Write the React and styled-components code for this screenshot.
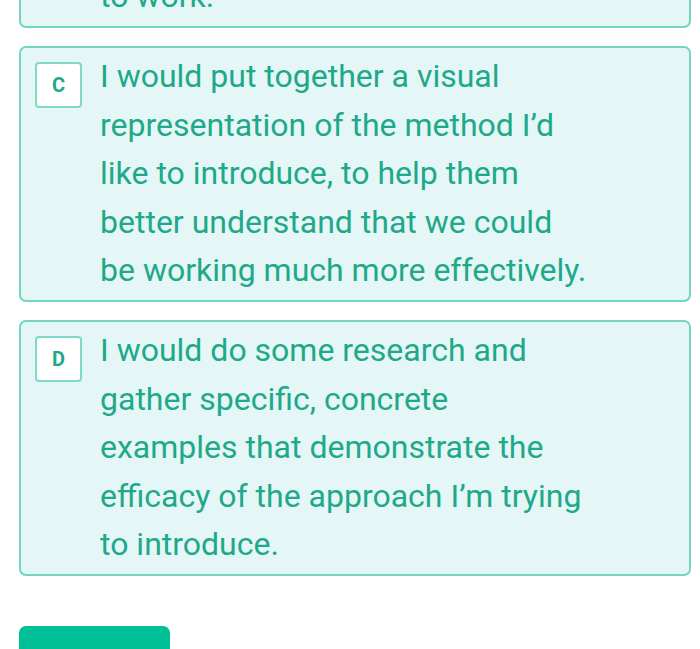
import styled, { createGlobalStyle } from "styled-components";

const options = [
  { letter: "A", lines: ["to work."], hidden: true },
  {
    letter: "C",
    lines: [
      "I would put together a visual",
      "representation of the method I’d",
      "like to introduce, to help them",
      "better understand that we could",
      "be working much more effectively.",
    ],
  },
  {
    letter: "D",
    lines: [
      "I would do some research and",
      "gather specific, concrete",
      "examples that demonstrate the",
      "efficacy of the approach I’m trying",
      "to introduce.",
    ],
  },
];

const App = () => {
  return (
    <>
      <GlobalStyle />
      <Page>
        <List>
          {options.map((opt) => (
            <Option key={opt.letter}>
              {!opt.hidden && <Badge>{opt.letter}</Badge>}
              <Answer $indent={opt.hidden}>
                {opt.lines.map((line, i) => (
                  <Line key={i}>{line}</Line>
                ))}
              </Answer>
            </Option>
          ))}
        </List>
        <Submit />
      </Page>
    </>
  );
};

const GlobalStyle = createGlobalStyle`
  html, body {
    margin: 0;
    padding: 0;
    background: #ffffff;
    overflow: hidden;
  }
  body {
    font-family: Roboto, "Liberation Sans", sans-serif;
  }
`;

const Page = styled.main`
  width: 700px;
  height: 649px;
  padding: 0 9px 0 19px;
  box-sizing: border-box;
  overflow: hidden;
`;

const List = styled.div`
  display: flex;
  flex-direction: column;
  row-gap: 18px;
  margin-top: -34px;
`;

const Option = styled.div`
  display: flex;
  align-items: flex-start;
  column-gap: 18px;
  padding: 4px 16px 6px 14px;
  background: #e4f7f6;
  border: 2px solid #74d5c3;
  border-radius: 7px;
`;

const Badge = styled.div`
  flex: none;
  display: flex;
  align-items: center;
  justify-content: center;
  margin-top: 10px;
  width: 47px;
  height: 46px;
  box-sizing: border-box;
  background: #ffffff;
  border: 2px solid #7fd8c8;
  border-radius: 4px;
  color: #1fa88a;
  font-weight: 700;
  font-size: 20px;
`;

const Answer = styled.div`
  display: flex;
  flex-direction: column;
  padding-left: ${({ $indent }) => ($indent ? "65px" : "0")};
`;

const Line = styled.span`
  font-size: 32px;
  line-height: 48.4px;
  color: #1fa88a;
  white-space: nowrap;
`;

const Submit = styled.div`
  margin-top: 50px;
  width: 151px;
  height: 50px;
  background: #00bf96;
  border-radius: 7px;
`;

export default App;
